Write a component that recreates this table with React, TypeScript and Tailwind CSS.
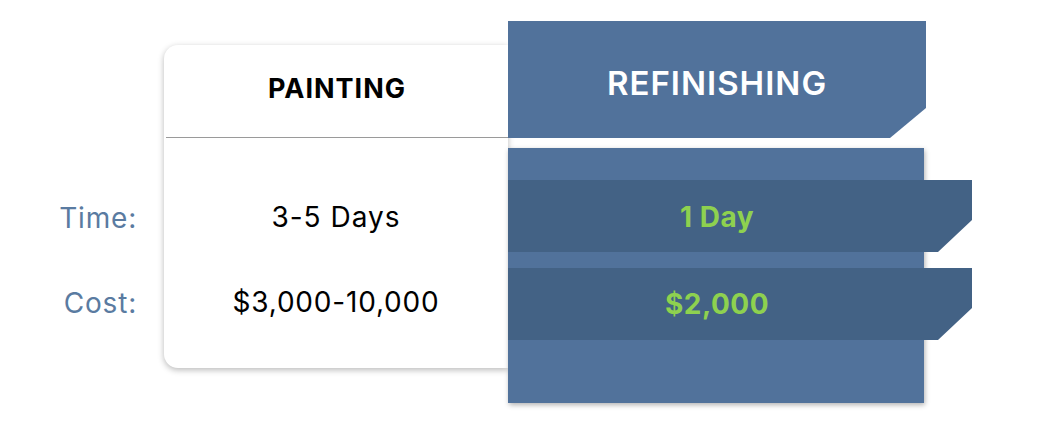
import React from "react";

const font = { fontFamily: "Inter, 'Open Sans', sans-serif" };

export default function App() {
  return (
    <div className="w-[1046px] h-[428px] bg-white overflow-hidden" style={font}>
      <div className="flex pt-[21px]">
        {/* labels */}
        <div className="w-[164px] pt-[161px] pr-[27px] flex flex-col gap-[13px] text-right text-[#5a7ba1] text-[28px] tracking-[0.8px]">
          <div className="h-[72px] flex items-center justify-end">Time:</div>
          <div className="h-[72px] flex items-center justify-end">Cost:</div>
        </div>

        {/* white card */}
        <div className="w-[344px] mt-[24px] h-[323px] bg-white rounded-l-[14px] shadow-[0_2px_6px_rgba(0,0,0,0.28)] flex flex-col">
          <div className="h-[93px] border-b border-[#9a9a9a] ml-[2px] flex items-center justify-center pb-[4px]">
            <span className="text-[27px] font-bold text-black tracking-[1px]">PAINTING</span>
          </div>
          <div className="pt-[43px] flex flex-col gap-[13px] text-[28px] text-black tracking-[0.8px]">
            <div className="h-[72px] flex items-center justify-center tracking-[1px]">3-5 Days</div>
            <div className="h-[72px] flex items-center justify-center">$3,000-10,000</div>
          </div>
        </div>

        {/* blue column */}
        <div className="w-[418px] flex flex-col gap-[10px]">
          <div className="h-[117px] bg-[#51729b] flex items-center justify-center pt-[8px] [clip-path:polygon(0_0,100%_0,100%_calc(100%-30px),calc(100%-36px)_100%,0_100%)]">
            <span className="text-white text-[33px] font-semibold tracking-[1px]">REFINISHING</span>
          </div>
          <div className="w-[416px] h-[255px] bg-[#51729b] shadow-[1px_2px_5px_rgba(0,0,0,0.3)] pt-[32px] flex flex-col gap-[16px]">
            <div className="w-[464px] h-[72px] bg-[#436285] flex items-center [clip-path:polygon(0_0,100%_0,100%_calc(100%-32px),calc(100%-34px)_100%,0_100%)]">
              <span className="w-[418px] text-center text-[#8ed14f] text-[28px] font-bold tracking-[0.5px] pt-[2px]">1 Day</span>
            </div>
            <div className="w-[464px] h-[72px] bg-[#436285] flex items-center [clip-path:polygon(0_0,100%_0,100%_calc(100%-32px),calc(100%-34px)_100%,0_100%)]">
              <span className="w-[418px] text-center text-[#8ed14f] text-[28px] font-bold tracking-[0.5px]">$2,000</span>
            </div>
          </div>
        </div>
      </div>
    </div>
  );
}
